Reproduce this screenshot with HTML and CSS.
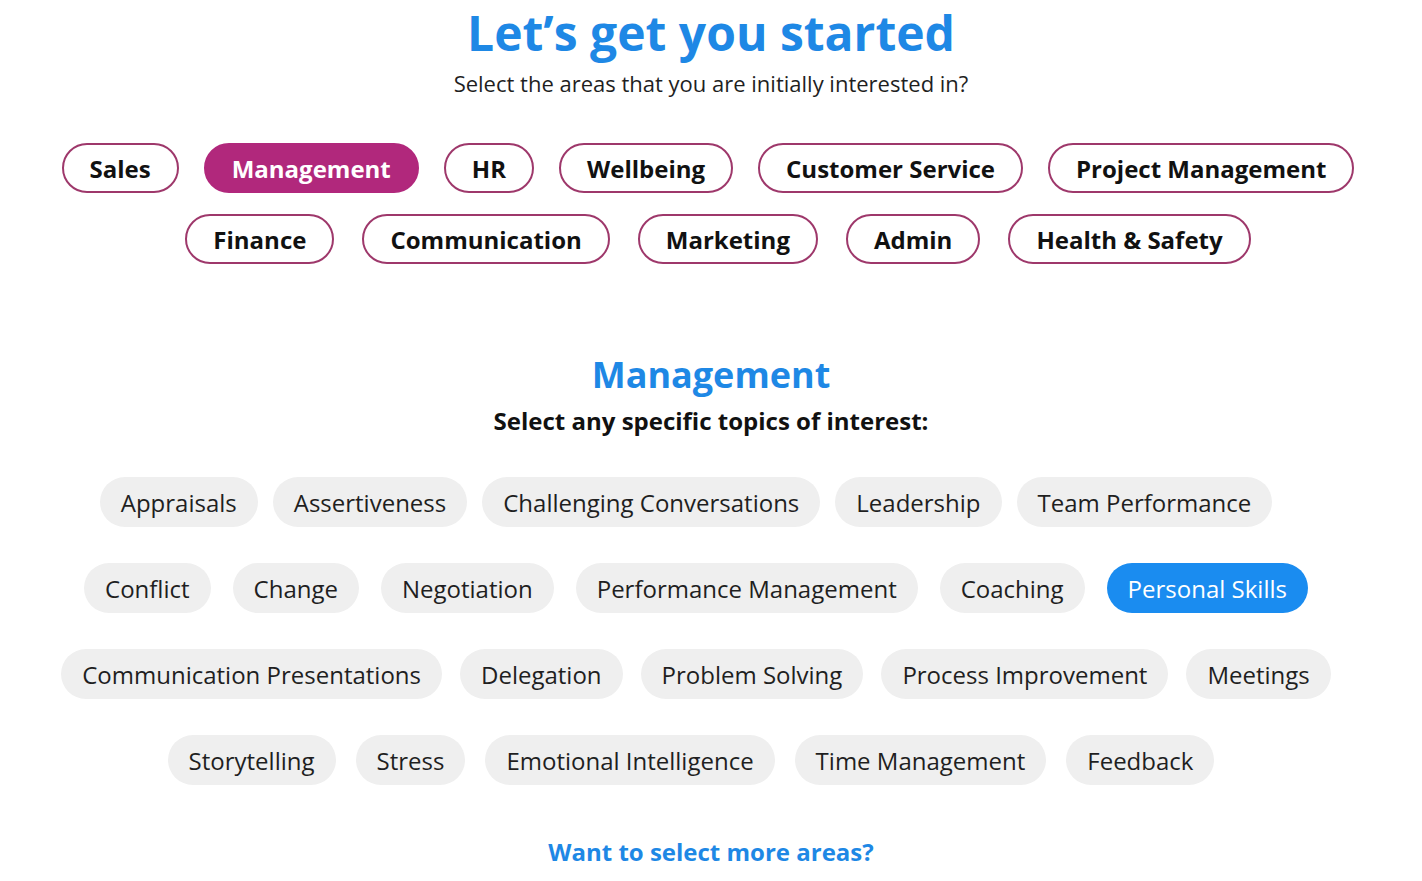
FILE: index.html
```html
<!DOCTYPE html>
<html lang="en">
<head>
<meta charset="utf-8">
<title>Let's get you started</title>
<link rel="stylesheet" href="styles.css">
</head>
<body>
<main class="page">
  <h1 class="title">Let’s get you started</h1>
  <p class="subtitle">Select the areas that you are initially interested in?</p>

  <div class="areas">
    <div class="area-row area-row--first">
      <button class="area">Sales</button>
      <button class="area area--active">Management</button>
      <button class="area">HR</button>
      <button class="area">Wellbeing</button>
      <button class="area">Customer Service</button>
      <button class="area">Project Management</button>
    </div>
    <div class="area-row area-row--second">
      <button class="area">Finance</button>
      <button class="area">Communication</button>
      <button class="area">Marketing</button>
      <button class="area">Admin</button>
      <button class="area">Health &amp; Safety</button>
    </div>
  </div>

  <h2 class="section-title">Management</h2>
  <p class="section-sub">Select any specific topics of interest:</p>

  <div class="topics">
    <div class="topic-row topic-row--tight">
      <button class="topic">Appraisals</button>
      <button class="topic">Assertiveness</button>
      <button class="topic">Challenging Conversations</button>
      <button class="topic">Leadership</button>
      <button class="topic">Team Performance</button>
    </div>
    <div class="topic-row topic-row--loose">
      <button class="topic">Conflict</button>
      <button class="topic">Change</button>
      <button class="topic">Negotiation</button>
      <button class="topic">Performance Management</button>
      <button class="topic">Coaching</button>
      <button class="topic topic--active">Personal Skills</button>
    </div>
    <div class="topic-row">
      <button class="topic">Communication Presentations</button>
      <button class="topic">Delegation</button>
      <button class="topic">Problem Solving</button>
      <button class="topic">Process Improvement</button>
      <button class="topic">Meetings</button>
    </div>
    <div class="topic-row topic-row--last">
      <button class="topic">Storytelling</button>
      <button class="topic">Stress</button>
      <button class="topic">Emotional Intelligence</button>
      <button class="topic">Time Management</button>
      <button class="topic">Feedback</button>
    </div>
  </div>

  <a class="more" href="#">Want to select more areas?</a>
</main>
</body>
</html>
```

FILE: styles.css
```css
* { box-sizing: border-box; }
html, body { margin: 0; padding: 0; background: #ffffff; }
body {
  font-family: "Open Sans", "Noto Sans", "Liberation Sans", sans-serif;
  color: #1a1a1a;
}
.page {
  width: 1422px;
  display: flex;
  flex-direction: column;
  align-items: center;
}
.title {
  margin: 0;
  font-size: 48px;
  line-height: 66px;
  font-weight: 700;
  color: #1e88e5;
}
.subtitle {
  margin: 2px 0 0;
  font-size: 22px;
  line-height: 30px;
  color: #1f1f1f;
}
.areas {
  margin-top: 45px;
  display: flex;
  flex-direction: column;
  gap: 21px;
}
.area-row {
  display: flex;
  justify-content: center;
  gap: 28px;
}
.area-row--first { gap: 25px; padding-right: 6px; }
.area-row--second { padding-left: 14px; }
.area {
  height: 50px;
  padding: 0 26px;
  border: 2px solid #9e386b;
  border-radius: 25px;
  background: #ffffff;
  font-family: inherit;
  font-size: 24px;
  font-weight: 700;
  color: #111111;
}
.area--active {
  background: #b1287c;
  border-color: #b1287c;
  color: #ffffff;
}
.section-title {
  margin: 89px 0 0;
  font-size: 36px;
  line-height: 44px;
  font-weight: 700;
  color: #1e88e5;
}
.section-sub {
  margin: 8px 0 0;
  font-size: 24px;
  line-height: 32px;
  font-weight: 700;
  color: #111111;
}
.topics {
  margin-top: 40px;
  display: flex;
  flex-direction: column;
  gap: 36px;
  padding-right: 30px;
}
.topic-row {
  display: flex;
  justify-content: center;
  gap: 18px;
}
.topic-row--tight { gap: 15px; padding-right: 20px; }
.topic-row--loose { gap: 22px; }
.topic-row--last { gap: 20px; padding-right: 10px; }
.topic {
  height: 50px;
  padding: 0 21px;
  border: none;
  border-radius: 25px;
  background: #efefef;
  font-family: inherit;
  font-size: 24px;
  font-weight: 400;
  color: #1f1f1f;
}
.topic--active {
  background: #1a8cf0;
  color: #ffffff;
}
.more {
  margin-top: 51px;
  font-size: 24px;
  line-height: 32px;
  font-weight: 700;
  color: #1e88e5;
  text-decoration: none;
}
```
